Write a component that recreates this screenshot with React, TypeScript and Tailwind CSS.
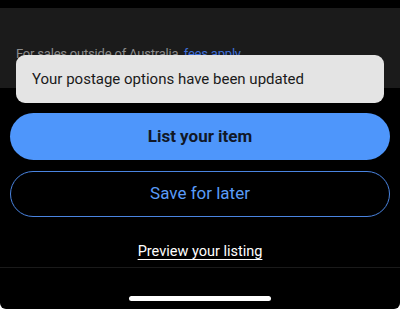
import React from "react";

export default function App() {
  return (
    <div className="w-[400px] h-[309px] bg-white" style={{ fontFamily: "Roboto, 'Noto Sans', sans-serif" }}>
      <div className="relative w-[400px] h-[309px] bg-black overflow-hidden rounded-b-[6px] flex flex-col">
        <div className="h-[8px] bg-black" />
        <div className="h-[80px] bg-[#1b1b1b] pl-[16px] pt-[37px]">
          <p className="text-[13px] leading-[18px] text-[#8c8c8c] tracking-[-0.2px]">
            For sales outside of Australia, <span className="text-[#3f6fd8]">fees apply</span>
          </p>
        </div>
        <div className="absolute left-[16px] top-[55px] w-[368px] h-[48px] rounded-[9px] bg-[#e4e4e4] flex items-center pl-[16px]">
          <span className="text-[15px] text-[#1a1a1a]">Your postage options have been updated</span>
        </div>
        <div className="px-[10px] pt-[25px] flex flex-col gap-[11px]">
          <button className="h-[47px] rounded-full bg-[#4e96fb] text-[17px] font-bold text-[#111827] flex items-center justify-center">
            List your item
          </button>
          <button className="h-[46px] rounded-full border border-[#4a84e0] text-[17px] text-[#5a9cf8] flex items-center justify-center">
            Save for later
          </button>
        </div>
        <div className="flex justify-center pt-[24px] h-[50px]">
          <span className="text-[14.5px] text-white underline underline-offset-[3px]">Preview your listing</span>
        </div>
        <div className="h-px bg-[#1a1a1a]" />
        <div className="flex justify-center pt-[28px]">
          <div className="w-[142px] h-[5px] rounded-full bg-white" />
        </div>
      </div>
    </div>
  );
}
